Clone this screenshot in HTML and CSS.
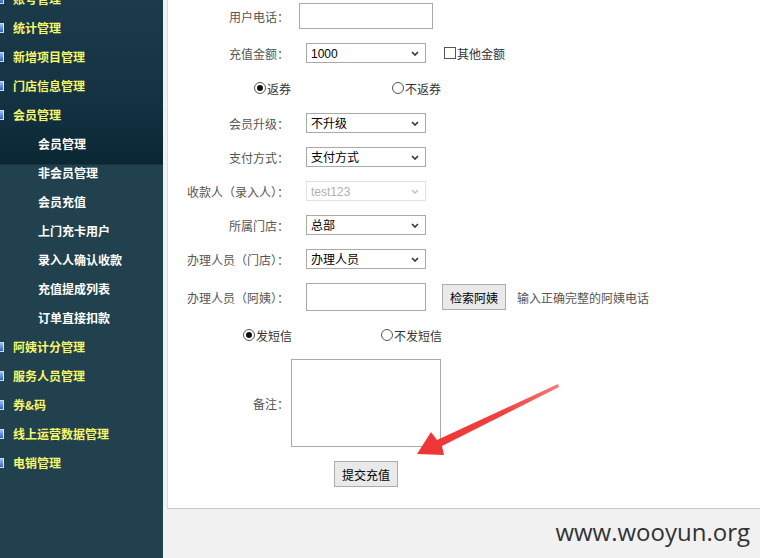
FILE: index.html
```html
<!DOCTYPE html>
<html lang="zh-CN">
<head>
<meta charset="utf-8">
<title>会员充值</title>
<link rel="stylesheet" href="styles.css">
</head>
<body>
<div class="page">
  <aside class="sidebar">
    <ul class="menu">
      <li class="item"><i class="ico"></i>账号管理</li>
      <li class="item"><i class="ico"></i>统计管理</li>
      <li class="item"><i class="ico"></i>新增项目管理</li>
      <li class="item"><i class="ico"></i>门店信息管理</li>
      <li class="item"><i class="ico"></i>会员管理</li>
      <li class="item sub">会员管理</li>
      <li class="item sub">非会员管理</li>
      <li class="item sub">会员充值</li>
      <li class="item sub">上门充卡用户</li>
      <li class="item sub">录入人确认收款</li>
      <li class="item sub">充值提成列表</li>
      <li class="item sub">订单直接扣款</li>
      <li class="item"><i class="ico"></i>阿姨计分管理</li>
      <li class="item"><i class="ico"></i>服务人员管理</li>
      <li class="item"><i class="ico"></i>券&amp;码</li>
      <li class="item"><i class="ico"></i>线上运营数据管理</li>
      <li class="item"><i class="ico"></i>电销管理</li>
    </ul>
  </aside>
  <main class="main">
    <div class="panel">
      <form class="form">
        <div class="row"><label class="lbl">用户电话<span class="colon">：</span></label><input class="txt txt-phone" type="text"></div>
        <div class="row">
          <label class="lbl">充值金额<span class="colon">：</span></label>
          <span class="sel"><select><option>1000</option></select><svg class="chev" viewBox="0 0 8 5"><path d="M1 1 L4 4 L7 1" fill="none" stroke="#333" stroke-width="1.6"/></svg></span>
          <span class="chk"></span><span class="chk-text">其他金额</span>
        </div>
        <div class="radios r1">
          <span class="opt"><span class="rd on"></span>返券</span>
          <span class="opt"><span class="rd"></span>不返券</span>
        </div>
        <div class="row">
          <label class="lbl">会员升级<span class="colon">：</span></label>
          <span class="sel"><select><option>不升级</option></select><svg class="chev" viewBox="0 0 8 5"><path d="M1 1 L4 4 L7 1" fill="none" stroke="#333" stroke-width="1.6"/></svg></span>
        </div>
        <div class="row">
          <label class="lbl">支付方式<span class="colon">：</span></label>
          <span class="sel"><select><option>支付方式</option></select><svg class="chev" viewBox="0 0 8 5"><path d="M1 1 L4 4 L7 1" fill="none" stroke="#333" stroke-width="1.6"/></svg></span>
        </div>
        <div class="row">
          <label class="lbl">收款人（录入人）<span class="colon">：</span></label>
          <span class="sel dis"><select disabled><option>test123</option></select><svg class="chev" viewBox="0 0 8 5"><path d="M1 1 L4 4 L7 1" fill="none" stroke="#c4c4c4" stroke-width="1.6"/></svg></span>
        </div>
        <div class="row">
          <label class="lbl">所属门店<span class="colon">：</span></label>
          <span class="sel"><select><option>总部</option></select><svg class="chev" viewBox="0 0 8 5"><path d="M1 1 L4 4 L7 1" fill="none" stroke="#333" stroke-width="1.6"/></svg></span>
        </div>
        <div class="row">
          <label class="lbl">办理人员（门店）<span class="colon">：</span></label>
          <span class="sel"><select><option>办理人员</option></select><svg class="chev" viewBox="0 0 8 5"><path d="M1 1 L4 4 L7 1" fill="none" stroke="#333" stroke-width="1.6"/></svg></span>
        </div>
        <div class="row">
          <label class="lbl">办理人员（阿姨）<span class="colon">：</span></label>
          <input class="txt txt-ayi" type="text">
          <button class="btn btn-search" type="button">检索阿姨</button>
          <span class="hint">输入正确完整的阿姨电话</span>
        </div>
        <div class="radios r2">
          <span class="opt"><span class="rd on"></span>发短信</span>
          <span class="opt"><span class="rd"></span>不发短信</span>
        </div>
        <div class="row">
          <label class="lbl">备注<span class="colon">：</span></label>
          <textarea class="memo"></textarea>
        </div>
        <div class="row">
          <button class="btn btn-submit" type="button">提交充值</button>
        </div>
      </form>
      <svg class="arrow" viewBox="168 0 592 508">
        <defs>
          <linearGradient id="ag" x1="1" y1="0" x2="0" y2="1">
            <stop offset="0" stop-color="#f87a7a"/>
            <stop offset="0.4" stop-color="#f04040"/>
            <stop offset="1" stop-color="#ee3434"/>
          </linearGradient>
        </defs>
        <polygon points="558,384 437,440 431,432 417,454 444,455 442,446 559,387" fill="url(#ag)"/>
      </svg>
    </div>
    <div class="footer">www.wooyun.org</div>
  </main>
</div>
</body>
</html>
```
FILE: styles.css
```css
html, body {
  margin: 0;
  padding: 0;
}
body {
  background: #f1f1f1;
  font-family: "Liberation Sans", "Noto Sans CJK SC", sans-serif;
  font-size: 12px;
}
.page {
  display: flex;
  width: 760px;
  height: 558px;
  overflow: hidden;
}
.sidebar {
  width: 163px;
  flex: none;
  overflow: hidden;
  background: linear-gradient(to bottom, #1b3a4a 0, #133242 100px, #0b2734 164px, #21414f 165px, #21414f 100%);
}
.menu {
  list-style: none;
  margin: -16px 0 0;
  padding: 0;
}
.item {
  height: 29px;
  display: flex;
  align-items: center;
  font-family: "Noto Sans CJK SC", sans-serif;
  font-weight: bold;
  font-size: 12px;
  color: #f6f66a;
  white-space: nowrap;
}
.ico {
  width: 4px;
  height: 10px;
  margin-right: 9px;
  background: linear-gradient(to bottom, #9cc0f5, #2c62cc);
  border-right: 1px solid #e4ecf8;
  border-top: 1px solid #c8d8f0;
  border-bottom: 1px solid #c8d8f0;
  box-sizing: border-box;
}
.item.sub {
  color: #ffffff;
  padding-left: 38px;
}
.main {
  flex: 1;
  margin-left: 4px;
  display: flex;
  flex-direction: column;
}
.panel {
  position: relative;
  height: 509px;
  background: #fff;
  border-left: 1px solid #dcdcdc;
  border-bottom: 1px solid #c8c8c8;
  box-sizing: border-box;
  flex: none;
}
.form {
  display: flex;
  flex-direction: column;
  gap: 14px;
  padding-top: 3px;
  margin: 0;
}
.row {
  display: flex;
  align-items: center;
}
.lbl {
  width: 121px;
  flex: none;
  text-align: right;
  color: #555;
  font-size: 12px;
  white-space: nowrap;
}
.colon {
  font-family: "Noto Sans CJK TC", sans-serif;
}
.txt {
  border: 1px solid #a9a9a9;
  box-sizing: border-box;
  padding: 0 4px;
  margin: 0;
  background: #fff;
}
.txt-phone {
  width: 134px;
  height: 26px;
  margin-left: 10px;
}
.txt-ayi {
  width: 120px;
  height: 28px;
  margin-left: 17px;
}
.sel {
  position: relative;
  width: 120px;
  height: 20px;
  margin-left: 17px;
  flex: none;
}
.sel select {
  -webkit-appearance: none;
  appearance: none;
  width: 100%;
  height: 100%;
  margin: 0;
  border: 1px solid #a9a9a9;
  border-radius: 0;
  background: #fff;
  padding: 1px 0 0 4px;
  font-family: "Liberation Sans", "Noto Sans CJK SC", sans-serif;
  font-size: 12px;
  color: #000;
  box-sizing: border-box;
}
.sel.dis select {
  color: #8f8f8f;
  border-color: #d6d6d6;
  background: #fff;
}
.chev {
  position: absolute;
  right: 7px;
  top: 8px;
  width: 8px;
  height: 5px;
  pointer-events: none;
}
.chk {
  width: 12px;
  height: 12px;
  border: 1px solid #555;
  box-sizing: border-box;
  margin-left: 18px;
  flex: none;
}
.chk-text {
  color: #333;
  margin-left: 1px;
}
.radios {
  display: flex;
  align-items: center;
}
.radios.r1 {
  height: 22px;
  padding-left: 86px;
}
.radios.r2 {
  height: 20px;
  padding-left: 75px;
}
.opt {
  display: flex;
  align-items: center;
  width: 138px;
  color: #333;
  font-size: 12px;
}
.rd {
  width: 12px;
  height: 12px;
  border: 1px solid #555;
  border-radius: 50%;
  box-sizing: border-box;
  margin-right: 1px;
  display: flex;
  align-items: center;
  justify-content: center;
  flex: none;
}
.rd.on::after {
  content: "";
  width: 6px;
  height: 6px;
  border-radius: 50%;
  background: #111;
}
.btn {
  height: 26px;
  width: 64px;
  padding: 0;
  border: 1px solid #adadad;
  background: #e9e9e9;
  color: #000;
  font-family: "Noto Sans CJK SC", sans-serif;
  font-size: 12px;
  border-radius: 0;
}
.btn-search {
  margin-left: 16px;
}
.hint {
  margin-left: 11px;
  color: #555;
}
.memo {
  width: 150px;
  height: 88px;
  margin: 0 0 0 2px;
  border: 1px solid #a9a9a9;
  box-sizing: border-box;
  resize: none;
}
.btn-submit {
  margin-left: 166px;
}
.arrow {
  position: absolute;
  left: 0;
  top: 0;
  width: 592px;
  height: 508px;
  pointer-events: none;
}
.footer {
  flex: 1;
  display: flex;
  justify-content: flex-end;
  padding: 6px 10px 0 0;
  font-family: "Open Sans", sans-serif;
  font-size: 24px;
  color: #333;
}
```
